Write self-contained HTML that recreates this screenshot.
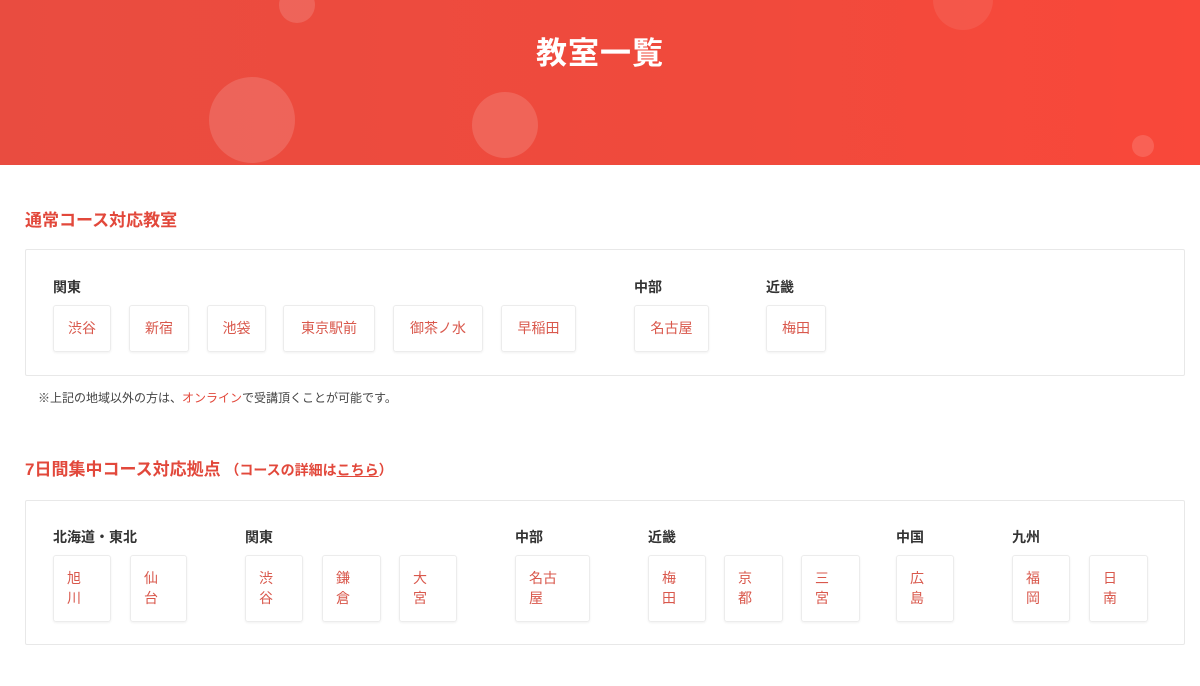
<!DOCTYPE html>
<html><head><meta charset="utf-8"><style>
*{margin:0;padding:0;box-sizing:border-box}
body{width:1200px;height:686px;background:#fff;font-family:"Liberation Sans","Noto Sans CJK JP",sans-serif;position:relative;overflow:hidden}
.hd{position:absolute;left:0;top:0;width:1200px;height:165px;background:linear-gradient(90deg,#e94c40,#f04a3c 60%,#f9483a);overflow:hidden}
.c{position:absolute;border-radius:50%;background:rgba(255,255,255,.14)}
.ttl{position:absolute;left:0;width:1200px;top:28px;text-align:center;color:#fff;font-size:31px;font-weight:bold;letter-spacing:1px}
.h2{position:absolute;left:25px;color:#e2483b;font-size:17px;font-weight:bold}
.h2 small{font-size:14px}
.box{position:absolute;left:25px;width:1160px;border:1px solid #e8e8e8;border-radius:2px}
.lb{position:absolute;font-size:14px;font-weight:bold;color:#333}
.b{position:absolute;border:1px solid #ececec;border-radius:3px;box-shadow:0 1px 2px rgba(0,0,0,.06);color:#d9584c;font-size:14px;text-align:center}
.b1{top:305px;height:47px;line-height:45px}
.b2{top:555px;height:67px;width:58px;text-align:left;padding:12px 0 0 13px;line-height:20px}
.note{position:absolute;left:38px;top:389px;font-size:12px;color:#444}
</style></head><body>
<div class="hd">
<div class="c" style="left:209px;top:77px;width:86px;height:86px"></div>
<div class="c" style="left:472px;top:92px;width:66px;height:66px"></div>
<div class="c" style="left:279px;top:-13px;width:36px;height:36px"></div>
<div class="c" style="left:933px;top:-30px;width:60px;height:60px;background:rgba(255,255,255,.08)"></div>
<div class="c" style="left:1132px;top:135px;width:22px;height:22px"></div>
<div class="ttl">教室一覧</div>
</div>
<div class="h2" style="top:206px">通常コース対応教室</div>
<div class="box" style="top:249px;height:127px"></div>
<div class="lb" style="left:53px;top:277px">関東</div>
<div class="lb" style="left:634px;top:277px">中部</div>
<div class="lb" style="left:766px;top:277px">近畿</div>
<div class="b b1" style="left:53px;width:58px">渋谷</div>
<div class="b b1" style="left:129px;width:60px">新宿</div>
<div class="b b1" style="left:207px;width:59px">池袋</div>
<div class="b b1" style="left:283px;width:92px">東京駅前</div>
<div class="b b1" style="left:393px;width:90px">御茶ノ水</div>
<div class="b b1" style="left:501px;width:75px">早稲田</div>
<div class="b b1" style="left:634px;width:75px">名古屋</div>
<div class="b b1" style="left:766px;width:60px">梅田</div>
<div class="note">※上記の地域以外の方は、<span style="color:#e2483b">オンライン</span>で受講頂くことが可能です。</div>
<div class="h2" style="top:455px">7日間集中コース対応拠点 <small>（コースの詳細は<u>こちら</u>）</small></div>
<div class="box" style="top:500px;height:145px"></div>
<div class="lb" style="left:53px;top:527px">北海道・東北</div>
<div class="lb" style="left:245px;top:527px">関東</div>
<div class="lb" style="left:515px;top:527px">中部</div>
<div class="lb" style="left:648px;top:527px">近畿</div>
<div class="lb" style="left:896px;top:527px">中国</div>
<div class="lb" style="left:1012px;top:527px">九州</div>
<div class="b b2" style="left:53px">旭<br>川</div>
<div class="b b2" style="left:130px;width:57px">仙<br>台</div>
<div class="b b2" style="left:245px">渋<br>谷</div>
<div class="b b2" style="left:322px;width:59px">鎌<br>倉</div>
<div class="b b2" style="left:399px">大<br>宮</div>
<div class="b b2" style="left:515px;width:75px">名古<br>屋</div>
<div class="b b2" style="left:648px">梅<br>田</div>
<div class="b b2" style="left:724px;width:59px">京<br>都</div>
<div class="b b2" style="left:801px;width:59px">三<br>宮</div>
<div class="b b2" style="left:896px">広<br>島</div>
<div class="b b2" style="left:1012px">福<br>岡</div>
<div class="b b2" style="left:1089px;width:59px">日<br>南</div>
</body></html>
